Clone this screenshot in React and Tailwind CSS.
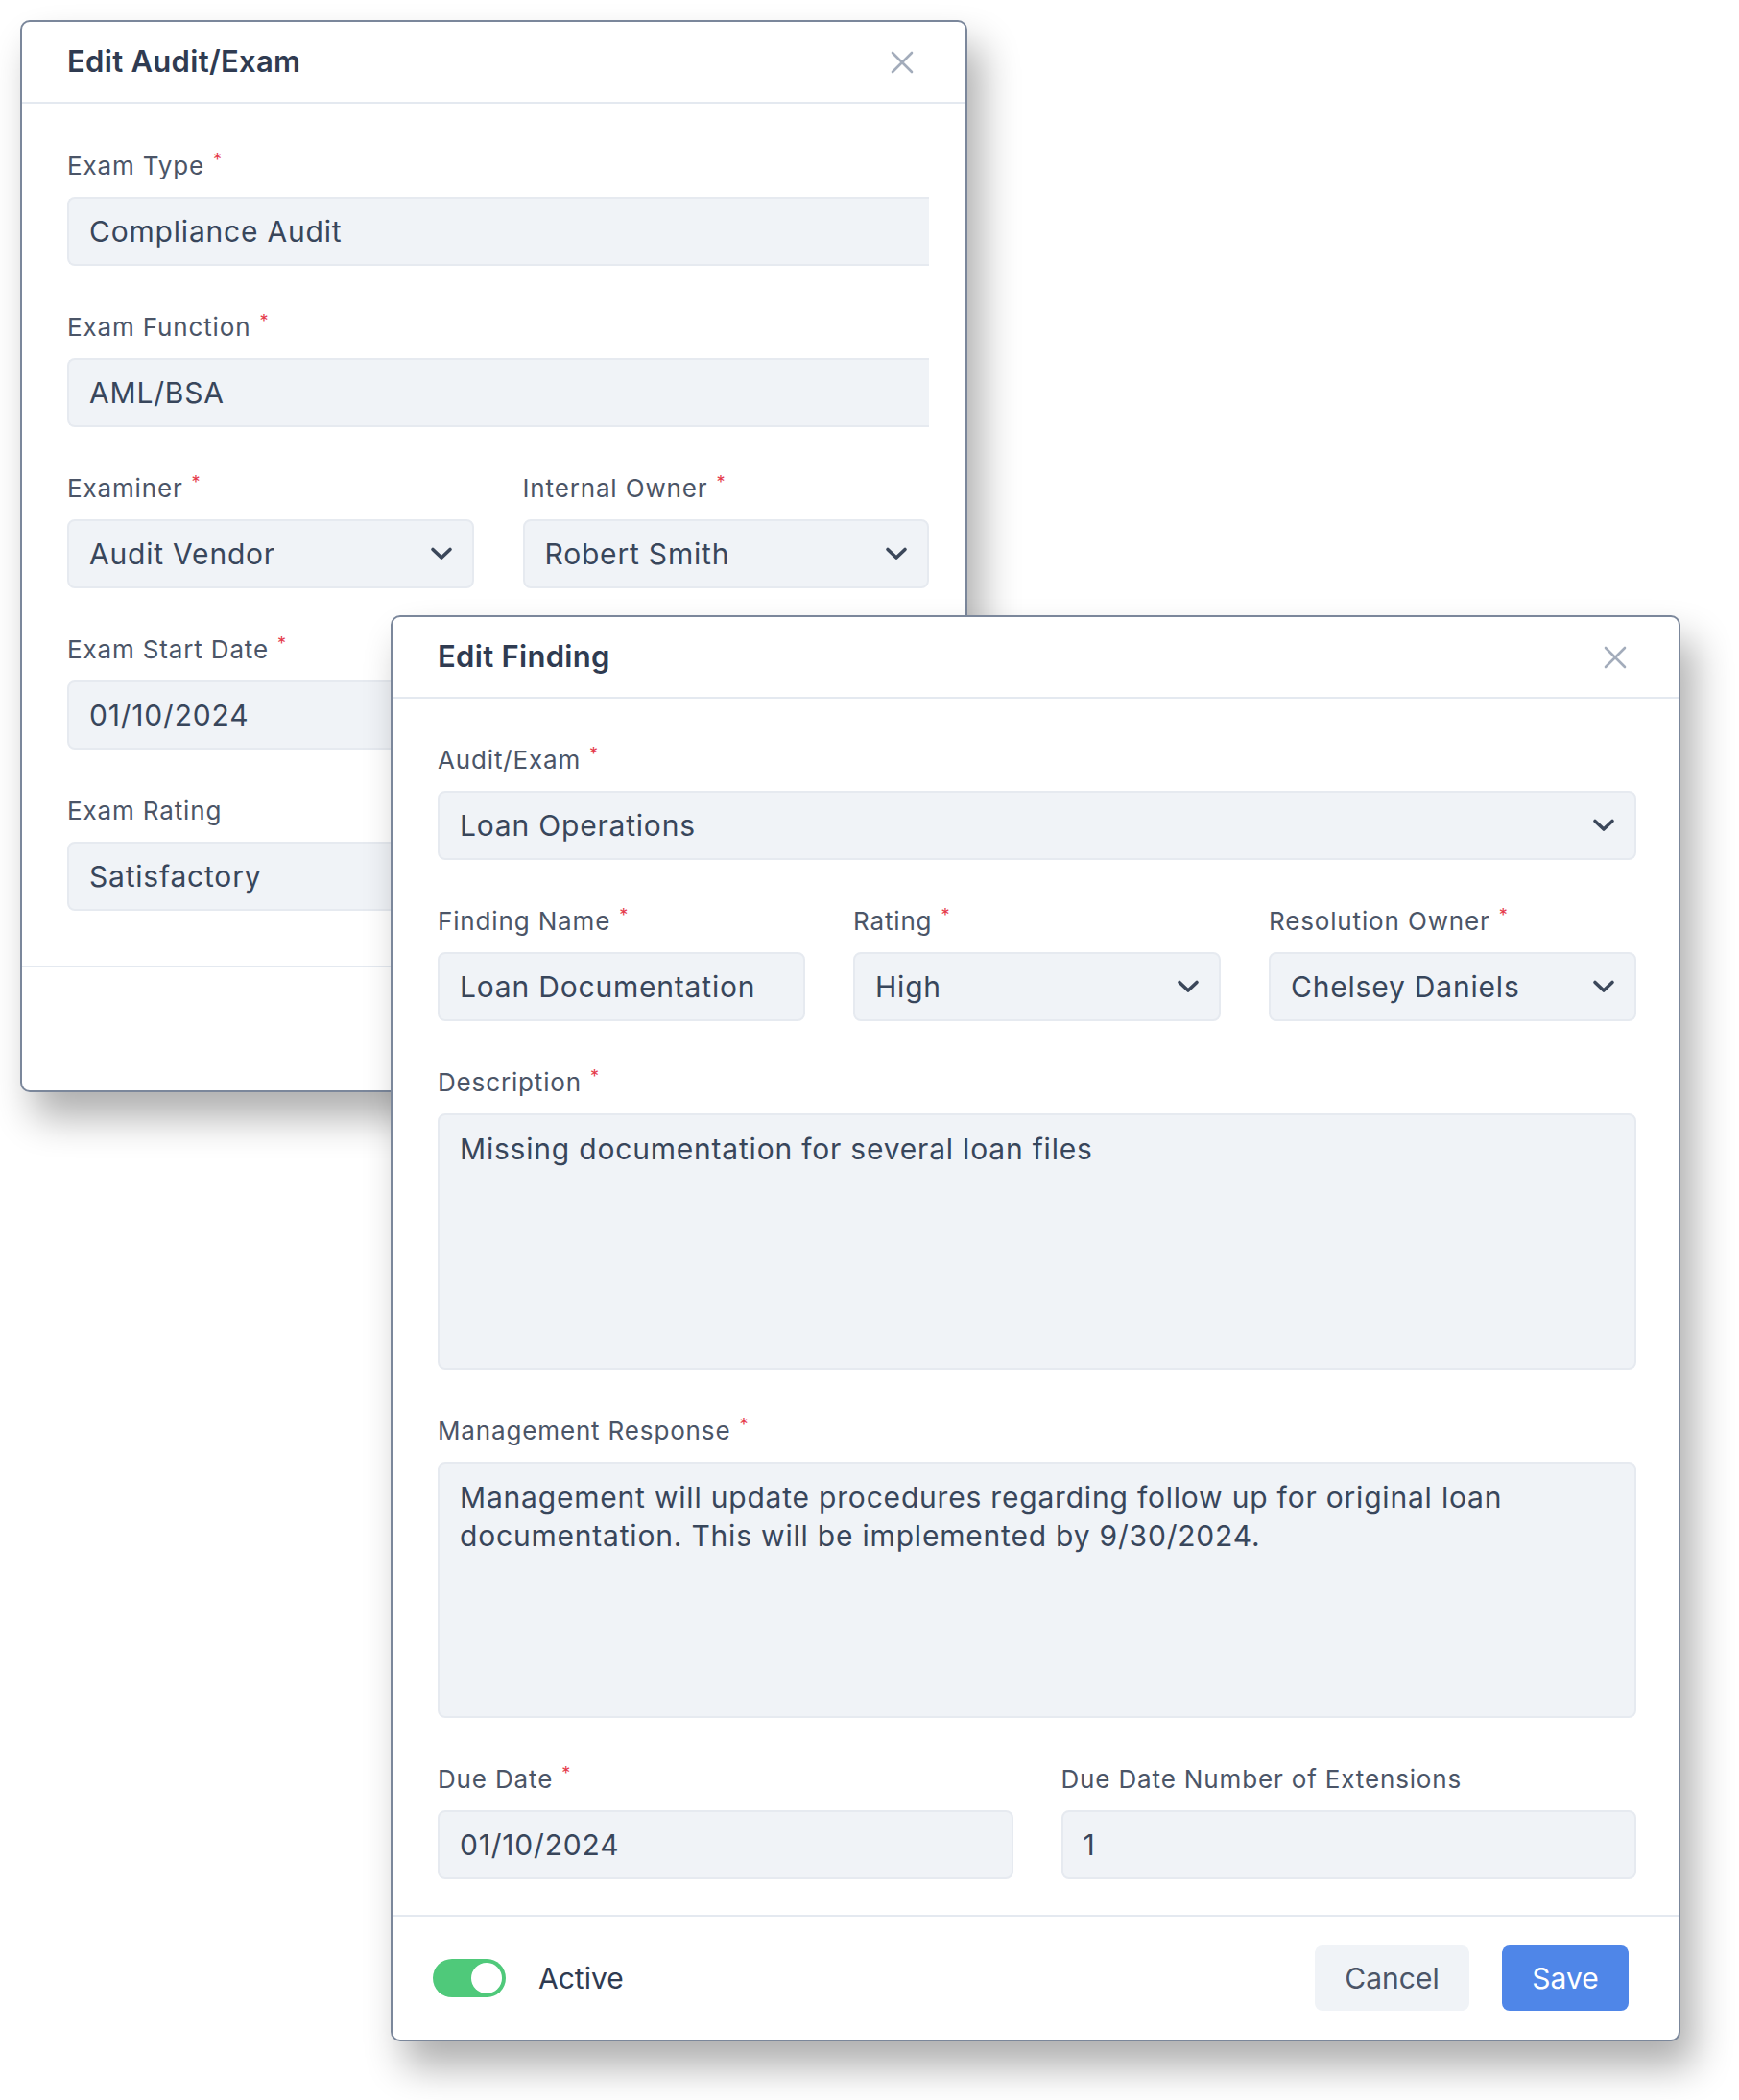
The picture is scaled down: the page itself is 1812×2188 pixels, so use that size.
import React from "react";

const font = { fontFamily: "Inter, 'Noto Sans', sans-serif" };

function Req() {
  return (
    <span className="ml-[9px] inline-block align-top text-[18px] leading-[24px] tracking-normal text-[#e5394a]">*</span>
  );
}

function Label({ children, req }) {
  return (
    <div className="mb-[14px] h-[36px] text-[26px] leading-[36px] tracking-[0.85px] text-[#4b5567]">
      {children}
      {req && <Req />}
    </div>
  );
}

function Chevron() {
  return (
    <svg width="24" height="16" viewBox="0 0 24 16" fill="none">
      <path d="M3 3.5 L12 12 L21 3.5" stroke="#3b475a" strokeWidth="3.6" strokeLinecap="round" strokeLinejoin="round" />
    </svg>
  );
}

function Input({ value, select, cut }) {
  return (
    <div
      className={`flex h-[72px] items-center justify-between border-2 border-[#e6eaf0] bg-[#f0f3f7] pl-[21px] pr-[20px] text-[30px] tracking-[0.8px] text-[#38465b] ${cut ? "rounded-l-[8px] border-r-0" : "rounded-[8px]"}`}
    >
      <span>{value}</span>
      {select && <Chevron />}
    </div>
  );
}

function TextArea({ value }) {
  return (
    <div className="h-[267px] rounded-[8px] border-2 border-[#e6eaf0] bg-[#f0f3f7] px-[21px] pt-[15px] text-[30px] leading-[40px] tracking-[0.8px] text-[#38465b]">
      {value}
    </div>
  );
}

function Field({ label, req, children, className = "" }) {
  return (
    <div className={className}>
      <Label req={req}>{label}</Label>
      {children}
    </div>
  );
}

function CloseX() {
  return (
    <svg width="26" height="26" viewBox="0 0 26 26" fill="none">
      <path d="M3 3 L23 23 M23 3 L3 23" stroke="#a3acbb" strokeWidth="2.6" strokeLinecap="round" />
    </svg>
  );
}

function Header({ title }) {
  return (
    <div className="flex h-[85px] items-center justify-between border-b-2 border-[#e4e9f0] pl-[47px] pr-[53px]">
      <div className="text-[31px] font-semibold tracking-[0.3px] text-[#2f3b51]">{title}</div>
      <CloseX />
    </div>
  );
}

export default function App() {
  return (
    <div style={font} className="relative h-[2188px] w-[1812px] overflow-hidden bg-white">
      {/* Edit Audit/Exam */}
      <div className="absolute left-[21px] top-[21px] flex h-[1117px] w-[987px] flex-col overflow-hidden rounded-[10px] border-2 border-[#7b879b] bg-white shadow-[14px_26px_40px_rgba(0,0,0,0.32)]">
        <Header title="Edit Audit/Exam" />
        <div className="flex flex-1 flex-col gap-[46px] pl-[47px] pr-[38px] pt-[47px]">
          <Field label="Exam Type" req>
            <Input value="Compliance Audit" cut />
          </Field>
          <Field label="Exam Function" req>
            <Input value="AML/BSA" cut />
          </Field>
          <div className="grid grid-cols-2 gap-[51px]">
            <Field label="Examiner" req>
              <Input value="Audit Vendor" select />
            </Field>
            <Field label="Internal Owner" req>
              <Input value="Robert Smith" select />
            </Field>
          </div>
          <div className="grid grid-cols-2 gap-[51px]">
            <Field label="Exam Start Date" req>
              <Input value="01/10/2024" />
            </Field>
            <div />
          </div>
          <div className="grid grid-cols-2 gap-[51px]">
            <Field label="Exam Rating">
              <Input value="Satisfactory" />
            </Field>
            <div />
          </div>
        </div>
        <div className="h-[130px] border-t-2 border-[#e4e9f0]" />
      </div>

      {/* Edit Finding */}
      <div className="absolute left-[407px] top-[641px] flex h-[1486px] w-[1344px] flex-col overflow-hidden rounded-[10px] border-2 border-[#7b879b] bg-white shadow-[14px_26px_40px_rgba(0,0,0,0.32)]">
        <Header title="Edit Finding" />
        <div className="flex flex-1 flex-col gap-[46px] pl-[47px] pr-[44px] pt-[46px]">
          <Field label="Audit/Exam" req>
            <Input value="Loan Operations" select />
          </Field>
          <div className="grid grid-cols-3 gap-[50px]">
            <Field label="Finding Name" req>
              <Input value="Loan Documentation" />
            </Field>
            <Field label="Rating" req>
              <Input value="High" select />
            </Field>
            <Field label="Resolution Owner" req>
              <Input value="Chelsey Daniels" select />
            </Field>
          </div>
          <Field label="Description" req>
            <TextArea value="Missing documentation for several loan files" />
          </Field>
          <Field label="Management Response" req>
            <TextArea value="Management will update procedures regarding follow up for original loan documentation. This will be implemented by 9/30/2024." />
          </Field>
          <div className="grid grid-cols-2 gap-[50px]">
            <Field label="Due Date" req>
              <Input value="01/10/2024" />
            </Field>
            <Field label="Due Date Number of Extensions">
              <Input value="1" />
            </Field>
          </div>
        </div>
        <div className="flex h-[130px] items-center justify-between border-t-2 border-[#e4e9f0] pl-[42px] pr-[52px]">
          <div className="flex items-center gap-[34px]">
            <div className="flex h-[40px] w-[76px] items-center justify-end rounded-full bg-[#4fc97a] pr-[4px]">
              <div className="h-[32px] w-[32px] rounded-full bg-white" />
            </div>
            <span className="text-[30px] text-[#2f3b51]">Active</span>
          </div>
          <div className="flex items-center gap-[34px]">
            <button className="h-[68px] w-[161px] rounded-[8px] bg-[#f0f3f7] text-[30px] text-[#4b5567]">Cancel</button>
            <button className="h-[68px] w-[132px] rounded-[8px] bg-[#4f86e8] text-[30px] text-white">Save</button>
          </div>
        </div>
      </div>
    </div>
  );
}
